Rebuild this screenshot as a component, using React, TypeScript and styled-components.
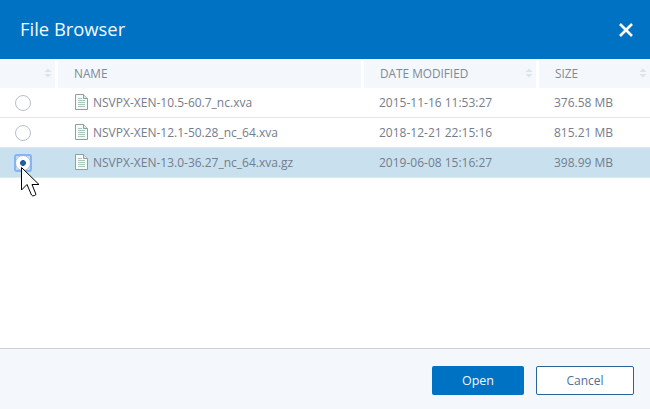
import styled, { createGlobalStyle } from "styled-components"

const files = [
    { name: "NSVPX-XEN-10.5-60.7_nc.xva", date: "2015-11-16 11:53:27", size: "376.58 MB" },
    { name: "NSVPX-XEN-12.1-50.28_nc_64.xva", date: "2018-12-21 22:15:16", size: "815.21 MB" },
    { name: "NSVPX-XEN-13.0-36.27_nc_64.xva.gz", date: "2019-06-08 15:16:27", size: "398.99 MB", selected: true },
]

const columns = "55px 1fr 172px 111px"

function SortIcon() {
    return (
        <svg width="8" height="10" viewBox="0 0 9 11">
            <path d="M4.5 0.5 L8.5 4.5 H0.5 Z M0.5 6.5 H8.5 L4.5 10.5 Z" fill="#dfe3e9" />
        </svg>
    )
}

function FileIcon() {
    return (
        <svg width="13" height="16" viewBox="0 0 13 16">
            <path d="M0.5 0.5 H8.5 L12.5 4.5 V15.5 H0.5 Z" fill="#f7fafa" stroke="#8aa19d" />
            <path d="M8.5 0.5 V4.5 H12.5" fill="#dfe8e5" stroke="#8aa19d" />
            <path d="M3 4.5 H7 M3 6.5 H10 M3 8.5 H10 M3 10.5 H10 M3 12.5 H10" stroke="#a9c9b6" />
        </svg>
    )
}

function CursorIcon() {
    return (
        <svg width="19" height="30" viewBox="0 0 19 30">
            <path
                d="M0.5 0.5 V23 L6 17.5 L10.5 28 Q11.5 29.5 13.5 28.5 L15 27.5 L11 17.5 H18 Z"
                fill="#fff"
                stroke="#000"
                strokeLinejoin="round"
            />
        </svg>
    )
}

export default function App() {
    return (
        <>
            <GlobalStyle />
            <Dialog>
                <Header>
                    <Title>File Browser</Title>
                    <CloseButton aria-label="close">
                        <svg width="16" height="16" viewBox="0 0 16 16">
                            <path d="M2 2 L14 14 M14 2 L2 14" stroke="#fff" strokeWidth="2.6" />
                        </svg>
                    </CloseButton>
                </Header>

                <Table>
                    <HeadRow>
                        <HeadCell $align="end"><SortIcon /></HeadCell>
                        <HeadCell>NAME</HeadCell>
                        <HeadCell>DATE MODIFIED<SortIcon /></HeadCell>
                        <HeadCell>SIZE<SortIcon /></HeadCell>
                    </HeadRow>

                    {files.map((file) => (
                        <Row key={file.name} $selected={file.selected}>
                            <RadioCell>
                                <Radio $selected={file.selected} />
                                {file.selected && <Cursor><CursorIcon /></Cursor>}
                            </RadioCell>
                            <NameCell>
                                <FileIcon />
                                {file.name}
                            </NameCell>
                            <DateCell>{file.date}</DateCell>
                            <SizeCell>{file.size}</SizeCell>
                        </Row>
                    ))}
                </Table>

                <Footer>
                    <OpenButton>Open</OpenButton>
                    <CancelButton>Cancel</CancelButton>
                </Footer>
            </Dialog>
        </>
    )
}

const GlobalStyle = createGlobalStyle`
    html, body {
        margin: 0;
        padding: 0;
        background: #fff;
    }

    * {
        box-sizing: border-box;
    }
`

const Dialog = styled.div`
    width: 650px;
    height: 409px;
    display: flex;
    flex-direction: column;
    overflow: hidden;
    font-family: "Open Sans", "Noto Sans", sans-serif;
    color: #747d8c;
`

const Header = styled.header`
    height: 59px;
    flex: none;
    display: flex;
    align-items: center;
    justify-content: space-between;
    padding: 0 16px 2px 20px;
    background: #0072c4;
`

const Title = styled.h1`
    margin: 0;
    font-size: 18.4px;
    font-weight: 400;
    color: #f4f9fd;
`

const CloseButton = styled.button`
    display: flex;
    padding: 2px 0 0;
    border: none;
    background: none;
`

const Table = styled.div`
    flex: 1;
`

const HeadRow = styled.div`
    display: grid;
    grid-template-columns: ${columns};
    height: 29px;
    column-gap: 3px;
    padding-top: 1px;
    background: #fff;
`

const HeadCell = styled.div<{ $align?: string }>`
    display: flex;
    align-items: center;
    justify-content: ${(props) => props.$align || "space-between"};
    padding: 0 3px 2px 16px;
    background: #f4f7fb;
    font-size: 11.8px;
    color: #7f8897;
`

const Row = styled.div<{ $selected?: boolean }>`
    display: grid;
    grid-template-columns: ${columns};
    height: 30px;
    column-gap: 3px;
    align-items: center;
    padding-bottom: 1px;
    border-bottom: 1px solid #e3e5e8;
    background: ${(props) => (props.$selected ? "#c9e1ef" : "#fff")};
    font-size: 12px;
`

const RadioCell = styled.div`
    position: relative;
    display: flex;
    align-items: center;
    padding: 2px 0 0 15px;
`

const Radio = styled.span<{ $selected?: boolean }>`
    position: relative;
    width: 16px;
    height: 16px;
    flex: none;
    border-radius: 50%;
    border: 1px solid #b9c0cb;
    background: ${(props) =>
        props.$selected ? "radial-gradient(circle, #22619a 0 2.6px, #fff 3.2px)" : "#fff"};

    ${(props) =>
        props.$selected &&
        `&::after {
            content: "";
            position: absolute;
            inset: -2px;
            border: 2px solid #85b4f2;
            border-radius: 3px;
        }`}
`

const Cursor = styled.span`
    position: absolute;
    left: 21px;
    top: 14px;
    display: flex;
`

const NameCell = styled.div`
    display: flex;
    align-items: center;
    gap: 5px;
    padding-left: 17px;
`

const DateCell = styled.div`
    padding-left: 15px;
`

const SizeCell = styled.div`
    padding-left: 15px;
`

const Footer = styled.footer`
    height: 61px;
    flex: none;
    display: flex;
    align-items: flex-start;
    justify-content: flex-end;
    gap: 12px;
    padding: 17px 16px 0 0;
    border-top: 1px solid #cdcfd2;
    background: #f4f7fb;
`

const OpenButton = styled.button`
    width: 92px;
    height: 29px;
    border: none;
    border-radius: 2px;
    background: #0072c4;
    color: #f2f7fb;
    font-family: inherit;
    font-size: 12.5px;
    font-weight: 500;
`

const CancelButton = styled.button`
    width: 98px;
    height: 29px;
    border: 1px solid #2a6496;
    border-radius: 2px;
    background: #fff;
    color: #4b7298;
    font-family: inherit;
    font-size: 12px;
`
